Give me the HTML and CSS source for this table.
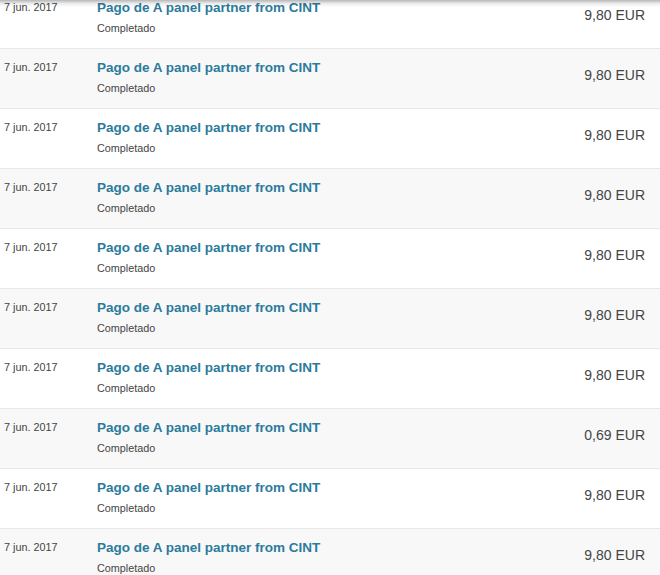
FILE: index.html
```html
<!DOCTYPE html>
<html lang="es">
<head>
<meta charset="utf-8">
<title>Actividad</title>
<link rel="stylesheet" href="styles.css">
</head>
<body>
<div class="top-shadow"></div>
<ul class="activity">
  <li class="row"><div class="date">7 jun. 2017</div><div class="main"><a class="title">Pago de A panel partner from CINT</a><div class="status">Completado</div></div><div class="amount">9,80 EUR</div></li>
  <li class="row"><div class="date">7 jun. 2017</div><div class="main"><a class="title">Pago de A panel partner from CINT</a><div class="status">Completado</div></div><div class="amount">9,80 EUR</div></li>
  <li class="row"><div class="date">7 jun. 2017</div><div class="main"><a class="title">Pago de A panel partner from CINT</a><div class="status">Completado</div></div><div class="amount">9,80 EUR</div></li>
  <li class="row"><div class="date">7 jun. 2017</div><div class="main"><a class="title">Pago de A panel partner from CINT</a><div class="status">Completado</div></div><div class="amount">9,80 EUR</div></li>
  <li class="row"><div class="date">7 jun. 2017</div><div class="main"><a class="title">Pago de A panel partner from CINT</a><div class="status">Completado</div></div><div class="amount">9,80 EUR</div></li>
  <li class="row"><div class="date">7 jun. 2017</div><div class="main"><a class="title">Pago de A panel partner from CINT</a><div class="status">Completado</div></div><div class="amount">9,80 EUR</div></li>
  <li class="row"><div class="date">7 jun. 2017</div><div class="main"><a class="title">Pago de A panel partner from CINT</a><div class="status">Completado</div></div><div class="amount">9,80 EUR</div></li>
  <li class="row"><div class="date">7 jun. 2017</div><div class="main"><a class="title">Pago de A panel partner from CINT</a><div class="status">Completado</div></div><div class="amount">0,69 EUR</div></li>
  <li class="row"><div class="date">7 jun. 2017</div><div class="main"><a class="title">Pago de A panel partner from CINT</a><div class="status">Completado</div></div><div class="amount">9,80 EUR</div></li>
  <li class="row"><div class="date">7 jun. 2017</div><div class="main"><a class="title">Pago de A panel partner from CINT</a><div class="status">Completado</div></div><div class="amount">9,80 EUR</div></li>
</ul>
</body>
</html>
```
FILE: styles.css
```css
html, body {
  margin: 0;
  padding: 0;
  background: #fff;
  font-family: "Liberation Sans", Arial, sans-serif;
  color: #333;
  overflow: hidden;
}
.top-shadow {
  position: fixed;
  top: 0;
  left: 0;
  right: 0;
  height: 7px;
  background: linear-gradient(rgba(0,0,0,0.28), rgba(0,0,0,0.08) 50%, rgba(0,0,0,0));
  z-index: 2;
}
.activity {
  list-style: none;
  margin: -11px 0 0;
  padding: 0;
}
.row {
  display: flex;
  height: 59px;
  border-bottom: 1px solid #e8e8e8;
  background: #fff;
}
.row:nth-child(even) {
  background: #f8f8f8;
}
.date {
  width: 93px;
  padding: 11px 0 0 4px;
  font-size: 10.8px;
  line-height: 14px;
  color: #444;
  flex: none;
}
.main {
  flex: 1;
  padding-top: 10px;
}
.title {
  display: block;
  font-size: 13.5px;
  line-height: 18px;
  font-weight: bold;
  color: #2b7b9c;
  text-decoration: none;
}
.status {
  margin-top: 4px;
  font-size: 10.8px;
  line-height: 14px;
  color: #444;
}
.amount {
  padding: 17px 15px 0 0;
  font-size: 14px;
  line-height: 18px;
  color: #444;
  text-align: right;
}
```
